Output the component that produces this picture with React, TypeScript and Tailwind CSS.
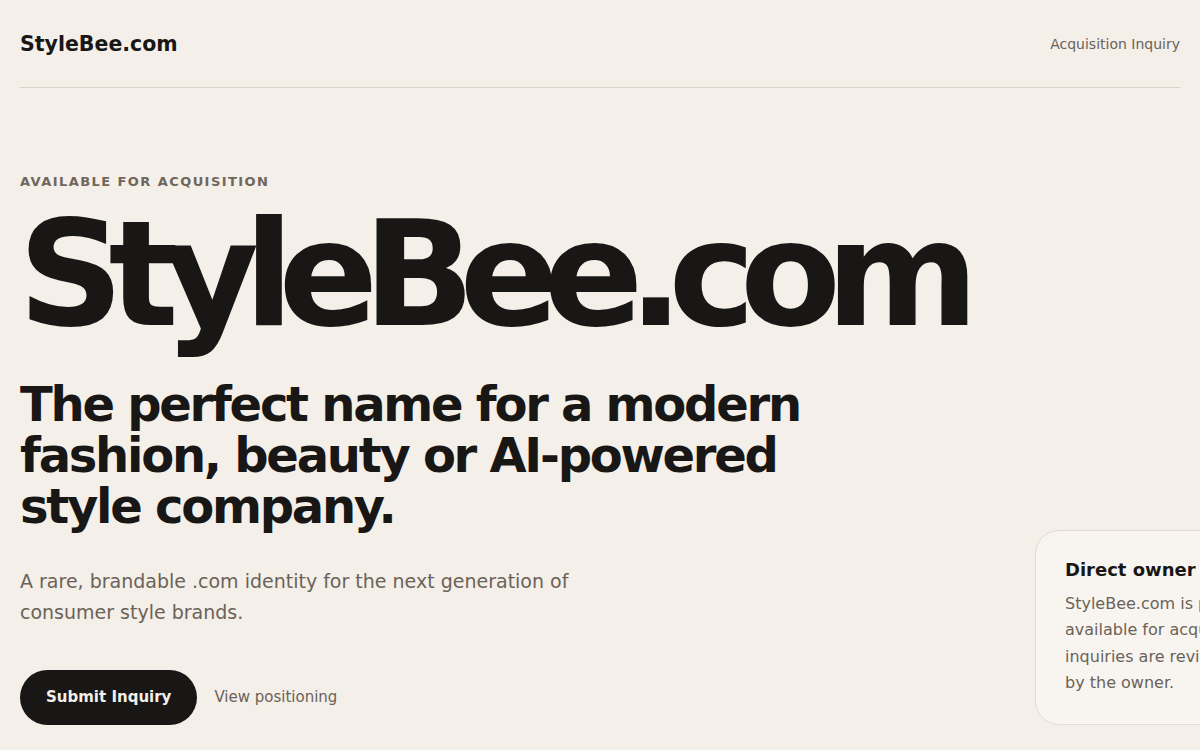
import React from 'react';

const App: React.FC = () => {
    return (
        <div className="min-h-screen w-full overflow-hidden bg-[#f4efe8] text-[#181716] font-['DejaVu_Sans',sans-serif]">
            <div className="px-5">

                {/* Header */}
                <header className="h-[88px] pt-[2px] flex items-center justify-between border-b border-[#d9d2c8]">
                    <a className="text-[20.5px] font-bold leading-none">StyleBee.com</a>
                    <a className="text-[14px] text-[#6b6259]">Acquisition Inquiry</a>
                </header>

                {/* Hero */}
                <main className="flex items-end gap-[40px] pt-[86px]">
                    <section className="w-[975px] shrink-0">
                        <p className="text-[13px] leading-[1.2] font-bold tracking-[0.11em] text-[#6f665c] uppercase">
                            Available for acquisition
                        </p>

                        <h1 className="mt-[11px] -ml-[2px] text-[147px] leading-none font-bold tracking-[-0.105em]">
                            StyleBee.com
                        </h1>

                        <h2 className="mt-[31px] max-w-[860px] text-[48px] leading-[51px] font-bold tracking-[-0.047em]">
                            The perfect name for a modern fashion, beauty or AI-powered style company.
                        </h2>

                        <p className="mt-[34px] max-w-[590px] text-[19px] leading-[31px] text-[#6b6259]">
                            A rare, brandable .com identity for the next generation of consumer style brands.
                        </p>

                        <div className="mt-[42px] flex items-center gap-[17px]">
                            <button className="h-[55px] px-[26px] rounded-full bg-[#181716] text-[#f4efe8] text-[15px] font-bold">
                                Submit Inquiry
                            </button>
                            <a className="text-[15px] text-[#6b6259]">View positioning</a>
                        </div>
                    </section>

                    {/* Owner card */}
                    <aside className="w-[340px] shrink-0 rounded-[24px] border border-[#e2dbd1] bg-[#f8f5f0] pt-[26px] pb-[27px] px-[29px]">
                        <h3 className="text-[18px] leading-[1.4] font-bold">Direct owner sale</h3>
                        <p className="mt-2 text-[16px] leading-[26.5px] text-[#6b6259]">
                            StyleBee.com is presently
                            <br />
                            available for acquisition. All
                            <br />
                            inquiries are reviewed directly
                            <br />
                            by the owner.
                        </p>
                    </aside>
                </main>
            </div>
        </div>
    );
};

export default App;
